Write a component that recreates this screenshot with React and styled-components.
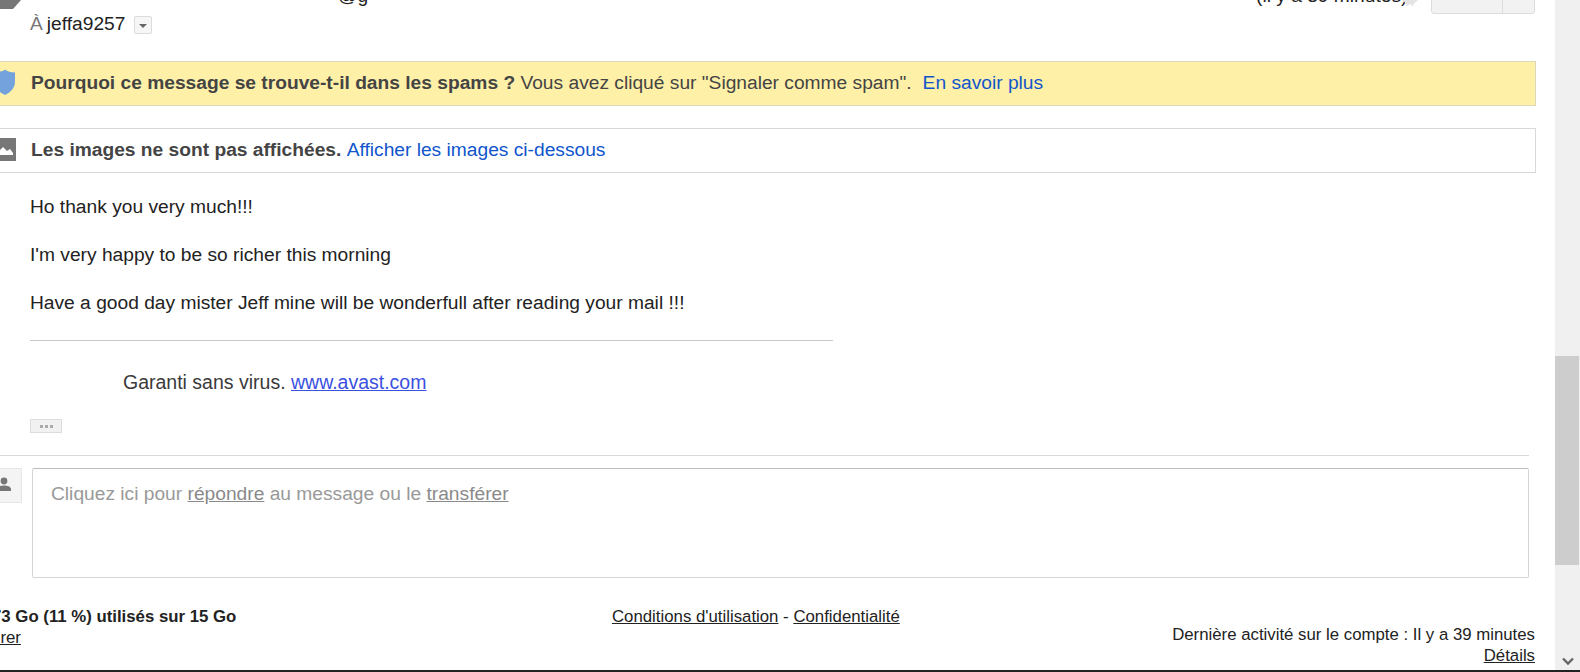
import React from "react";
import styled, { createGlobalStyle } from "styled-components";

const Global = createGlobalStyle`
  html, body { margin: 0; padding: 0; height: 100%; overflow: hidden; background: #fff; }
  body { font-family: "Liberation Sans", Arial, sans-serif; color: #222; }
`;

const Page = styled.div`
  width: 1580px; height: 672px; display: flex; flex-direction: column; overflow: hidden;
`;
const Viewport = styled.div`
  height: 670px; display: flex; overflow: hidden;
`;
const Main = styled.main`
  width: 1555px; display: flex; flex-direction: column; overflow: hidden; flex: none;
`;
const Taskbar = styled.div`
  height: 2px; background: #222; flex: none;
`;
const Scrollbar = styled.div`
  width: 25px; background: #f0f0f0; display: flex; flex-direction: column; flex: none;
`;
const ScrollSpacer = styled.div`
  height: 356px; flex: none;
`;
const Thumb = styled.div`
  height: 209px; width: 24px; background: #cdcdcd; flex: none;
`;
const ScrollArrow = styled.div`
  margin-top: auto; height: 17px; display: flex; align-items: center; justify-content: center; padding-left: 1px;
`;

const HeadRow = styled.div`
  height: 14px; display: flex; align-items: flex-end; position: relative; flex: none; overflow: hidden;
`;
const Tag = styled.svg`
  position: absolute; left: 0; top: 0;
`;
const Clipped = styled.span`
  position: absolute; font-size: ${p => p.$size}px; line-height: 16px; color: #222; white-space: nowrap;
  top: ${p => p.$top}px; left: ${p => p.$left}px;
`;
const Star = styled.svg`
  position: absolute; left: 1401px; top: 0;
`;
const BtnGroup = styled.div`
  position: absolute; left: 1431px; top: -10px; width: 104px; height: 24px; box-sizing: border-box;
  background: #f2f2f2; border: 1px solid #dcdcdc; border-radius: 3px; display: flex; justify-content: flex-end;
`;
const BtnPart = styled.div`
  width: 31px; border-left: 1px solid #dcdcdc;
`;

const ToRow = styled.div`
  height: 47px; padding: 0 0 0 30px; box-sizing: border-box; display: flex; align-items: flex-start; flex: none;
  font-size: 19.2px; line-height: 20px;
`;
const ToLabel = styled.span`
  color: #777; margin-right: 4px;
`;
const ToName = styled.span`
  color: #222;
`;
const CaretBtn = styled.div`
  width: 18px; height: 18px; box-sizing: border-box; margin: 2px 0 0 9px; border: 1px solid #dcdcdc; border-radius: 2px;
  background: #f6f6f6; display: flex; align-items: center; justify-content: center;
  &::after { content: ""; border: 4px solid transparent; border-top: 4px solid #666; border-bottom: 0; margin-top: 1px; }
`;

const Banner = styled.div`
  width: 1536px; height: 45px; box-sizing: border-box; border: 1px solid ${p => p.$warn ? "#dcd9b8" : "#d8d8d8"};
  border-left: 0; background: ${p => p.$warn ? "#fff0a8" : "#fff"};
  display: flex; align-items: center; padding: 0 0 ${p => p.$warn ? "2px" : "1px"} 31px; position: relative; flex: none; white-space: pre;
  margin-bottom: ${p => p.$warn ? "22px" : "0"};
  font-size: 19.2px; color: #444;
`;
const BannerIcon = styled.svg`
  position: absolute; left: 0; top: ${p => p.$top}px;
`;
const Strong = styled.b`
  font-weight: 700; color: #444;
`;
const BlueLink = styled.span`
  color: #15c; margin-left: ${p => p.$ml || 0}px;
`;

const Body = styled.div`
  padding: 24px 0 0 30px; font-size: 19.2px; line-height: 20px; color: #222; flex: none; height: 276px; box-sizing: border-box;
`;
const Para = styled.p`
  margin: 0 0 28px;
`;
const Rule = styled.div`
  width: 803px; height: 1px; background: #c9c9c9; margin-top: -1px;
`;
const Virus = styled.div`
  margin: 31px 0 0 93px; font-size: 19.5px; color: #3a3a3a;
`;
const AvastLink = styled.a`
  color: #3b4fe0; text-decoration: underline;
`;
const Dots = styled.div`
  width: 32px; height: 14px; box-sizing: border-box; margin-top: 27px; background: #f1f1f1; border: 1px solid #dddddd;
  display: flex; align-items: center; justify-content: center; gap: 2px;
`;
const Dot = styled.i`
  width: 3px; height: 3px; background: #aaa; display: block;
`;

const Divider = styled.div`
  width: 1529px; height: 1px; background: #d9d9d9; flex: none; margin-top: 6px;
`;
const ReplyRow = styled.div`
  display: flex; align-items: flex-start; margin-top: 12px; flex: none;
`;
const AvatarBox = styled.div`
  width: 22px; height: 35px; box-sizing: border-box; background: #f4f4f4; border: 1px solid #e6e6e6; border-left: 0;
  position: relative; overflow: hidden; flex: none;
`;
const AvatarIcon = styled.svg`
  position: absolute; left: -7px; top: 5px;
`;
const ReplyBox = styled.div`
  margin-left: 10px; width: 1497px; height: 110px; box-sizing: border-box; border: 1px solid #d5d5d5; border-top-color: #bdbdbd; border-radius: 2px;
  padding: 15px 0 0 18px; font-size: 19.2px; line-height: 20px; color: #999; white-space: pre;
`;
const ReplyLink = styled.span`
  color: #8a8a8a; text-decoration: underline;
`;

const Footer = styled.div`
  display: grid; grid-template-columns: 500px 500px 1fr; margin-top: 28px; width: 1535px; font-size: 16.8px; line-height: 21px; color: #222; flex: none;
`;
const FootLeft = styled.div`
  margin-left: -8px; white-space: nowrap;
`;
const Under = styled.span`
  text-decoration: underline;
`;
const FootBold = styled.b`
  font-weight: 700; color: #222;
`;
const FootMid = styled.div`
  margin-left: 112px; white-space: pre;
`;
const FootRight = styled.div`
  text-align: right; padding-top: 18px;
`;
const Block = styled.div``;
const ClipWord = styled.div`
  margin-left: -14px;
`;

export default function App() {
  return (
    <Page>
      <Global />
      <Viewport>
        <Main>
          <HeadRow>
            <Tag width="22" height="10" viewBox="0 0 22 10"><path d="M0 0H21L13 9H0Z" fill="#777" /></Tag>
            <Clipped $left={338} $size={19.2} $top={-12}>@g</Clipped>
            <Clipped $left={1256} $size={19.2} $top={-12}>(il y a 39 minutes)</Clipped>
            <Star width="18" height="6" viewBox="0 0 18 6"><path d="M1 0H17L12 4.5L13 6H11.5L9 4L6 6H5L6 4.5Z" fill="#e4e4e4" /></Star>
            <BtnGroup><BtnPart /></BtnGroup>
          </HeadRow>
          <ToRow>
            <ToLabel>À</ToLabel>
            <ToName>jeffa9257</ToName>
            <CaretBtn />
          </ToRow>
          <Banner $warn>
            <BannerIcon $top={7} width="16" height="27" viewBox="0 0 16 27"><path d="M0 2.5C2 2.5 4 1.5 5 0.5C7 2.5 11 3.5 15 3.5V13C15 19 10 24 5 26C3 25 1 24 0 23Z" fill="#74a2dc" /></BannerIcon>
            <Strong>Pourquoi ce message se trouve-t-il dans les spams ? </Strong>Vous avez cliqué sur "Signaler comme spam".
            <BlueLink $ml={11}>En savoir plus</BlueLink>
          </Banner>
          <Banner>
            <BannerIcon $top={9} width="17" height="23" viewBox="0 0 17 23"><path d="M0 0H16V23H0Z" fill="#777" /><path d="M0 12L3 9L7 13L10 11L13 15V17H0Z" fill="#fff" /></BannerIcon>
            <Strong>Les images ne sont pas affichées. </Strong><BlueLink>Afficher les images ci-dessous</BlueLink>
          </Banner>
          <Body>
            <Para>Ho thank you very much!!!</Para>
            <Para>I'm very happy to be so richer this morning</Para>
            <Para>Have a good day mister Jeff mine will be wonderfull after reading your mail !!!</Para>
            <Rule />
            <Virus>Garanti sans virus. <AvastLink>www.avast.com</AvastLink></Virus>
            <Dots><Dot /><Dot /><Dot /></Dots>
          </Body>
          <Divider />
          <ReplyRow>
            <AvatarBox>
              <AvatarIcon width="22" height="22" viewBox="0 0 22 22"><circle cx="11" cy="7" r="3.4" fill="#777" /><path d="M4 17V15C4 12.6 8 11.5 11 11.5S18 12.6 18 15V17Z" fill="#777" /></AvatarIcon>
            </AvatarBox>
            <ReplyBox>Cliquez ici pour <ReplyLink>répondre</ReplyLink> au message ou le <ReplyLink>transférer</ReplyLink></ReplyBox>
          </ReplyRow>
          <Footer>
            <FootLeft>
              <FootBold>73 Go (11 %) utilisés sur 15 Go</FootBold>
              <ClipWord><Under>Gérer</Under></ClipWord>
            </FootLeft>
            <FootMid><Under>Conditions d'utilisation</Under> - <Under>Confidentialité</Under></FootMid>
            <FootRight>
              <Block>Dernière activité sur le compte : Il y a 39 minutes</Block>
              <Under>Détails</Under>
            </FootRight>
          </Footer>
        </Main>
        <Scrollbar>
          <ScrollSpacer />
          <Thumb />
          <ScrollArrow>
            <svg width="12" height="9" viewBox="0 0 12 9"><path d="M1 1.5L6 6.5L11 1.5" fill="none" stroke="#666" strokeWidth="2.4" /></svg>
          </ScrollArrow>
        </Scrollbar>
      </Viewport>
      <Taskbar />
    </Page>
  );
}
